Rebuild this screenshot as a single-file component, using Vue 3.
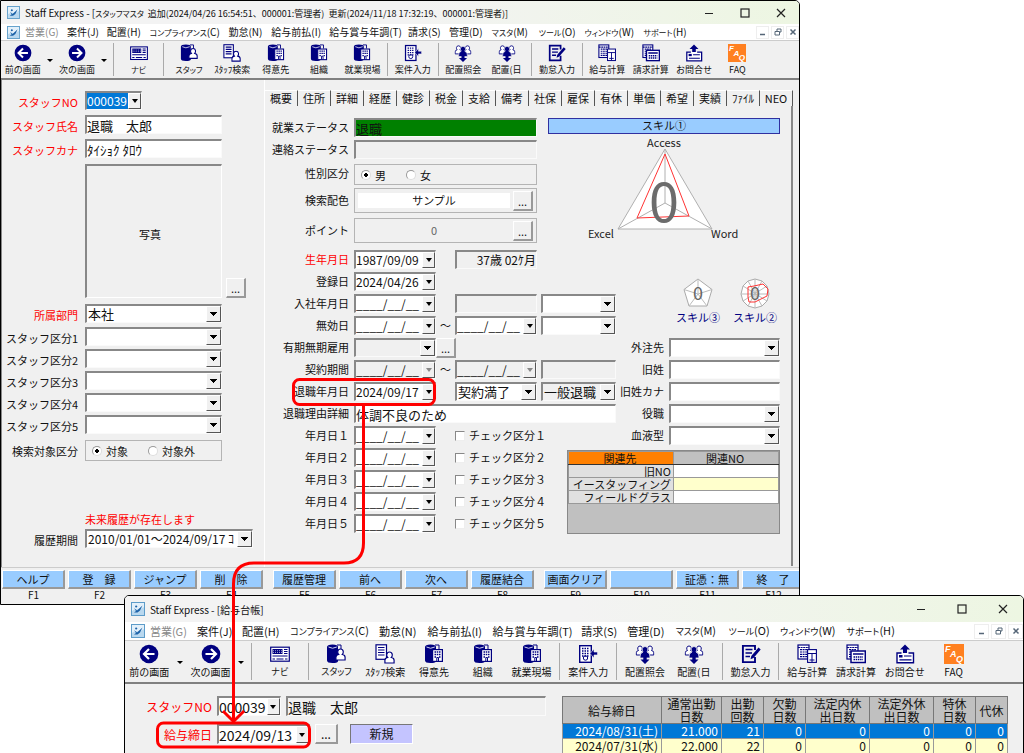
<script setup>
import { ref } from 'vue'

const menus = [
  { t: '営業', k: '(G)', off: true },
  { t: '案件', k: '(J)' },
  { t: '配置', k: '(H)' },
  { t: 'コンプライアンス', k: '(C)', kana: true },
  { t: '勤怠', k: '(N)' },
  { t: '給与前払', k: '(I)' },
  { t: '給与賞与年調', k: '(T)' },
  { t: '請求', k: '(S)' },
  { t: '管理', k: '(D)' },
  { t: 'マスタ', k: '(M)', kana: true },
  { t: 'ツール', k: '(O)', kana: true },
  { t: 'ウィンドウ', k: '(W)', kana: true },
  { t: 'サポート', k: '(H)', kana: true }
]

const tools = [
  { icon: 'prev', t: '前の画面' }, { drop: '前の画面の履歴' },
  { icon: 'next', t: '次の画面' }, { drop: '次の画面の履歴' },
  { sep: true }, { icon: 'navi', t: 'ナビ', kana: true },
  { sep: true }, { icon: 'staff', t: 'スタッフ', kana: true },
  { icon: 'search', t: 'ｽﾀｯﾌ検索' }, { icon: 'client', t: '得意先' },
  { icon: 'client', t: '組織' }, { icon: 'client', t: '就業現場' },
  { sep: true }, { icon: 'job', t: '案件入力' },
  { sep: true }, { icon: 'assign', t: '配置照会' }, { icon: 'assign', t: '配置(日' },
  { sep: true }, { icon: 'attend', t: '勤怠入力' },
  { sep: true }, { icon: 'pay', t: '給与計算' }, { icon: 'bill', t: '請求計算' },
  { icon: 'ask', t: 'お問合せ' }, { icon: 'faq', t: 'FAQ' }
]

const windows = [
  {
    id: 'master',
    title: [
      ['Staff Express - [', ''],
      ['スタッフマスタ', 'kana'],
      ['  追加(2024/04/26 16:54:51、000001:管理者)  更新(2024/11/18 17:32:19、000001:管理者)]', 'detail']
    ]
  },
  { id: 'ledger', title: [['Staff Express - [給与台帳]', '']] }
]

const tabs = ['概要', '住所', '詳細', '経歴', '健診', '税金', '支給', '備考', '社保', '雇保', '有休', '単価', '希望', '実績', 'ﾌｧｲﾙ', 'NEO']
const divisions = [1, 2, 3, 4, 5]
const wide = ['１', '２', '３', '４', '５']
const blank = '____/__/__'

const keys = [
  [['ヘルプ', 'F1'], ['登　録', 'F2'], ['ジャンプ', 'F3'], ['削　除', 'F4']],
  [['履歴管理', 'F5'], ['前へ', 'F6'], ['次へ', 'F7'], ['履歴結合', 'F8']],
  [['画面クリア', 'F9'], ['', 'F10'], ['証憑：無', 'F11'], ['終　了', 'F12']]
]

const heads = [['給与締日'], ['通常出勤', '日数'], ['出勤', '回数'], ['欠勤', '日数'], ['法定内休', '出日数'], ['法定外休', '出日数'], ['特休', '日数'], ['代休']]
const rows = [
  ['2024/08/31(土)', '21.000', '21', '0', '0', '0', '0', '0'],
  ['2024/07/31(水)', '22.000', '22', '0', '0', '0', '0', '0']
]

const target = ref('in')
const sex = ref('m')
</script>

<template>
  <main class="desktop">
    <svg class="defs" aria-hidden="true">
      <symbol id="i-logo" viewBox="0 0 14 14">
        <rect x=".5" y=".5" width="13" height="13" fill="#e3f0fa" stroke="#5d9cc9" />
        <path d="M1 9Q4 6 8 8L13 5V13H1Z" fill="#b9d8ef" />
        <path d="M3 6L6 8.500L11.500 3.500L9 8.500L6.500 10.500L3 10.500L5 9Z" fill="#1c62a8" />
        <circle cx="5.200" cy="4.500" r="1.100" fill="#1c62a8" />
      </symbol>
      <symbol id="i-prev" viewBox="0 0 20 20">
        <circle cx="10" cy="10" r="9.3" fill="#000080" />
        <path d="M15.500 10H5.500M10 5L5 10L10 15" fill="none" stroke="#fff" stroke-width="2.2" />
      </symbol>
      <symbol id="i-next" viewBox="0 0 20 20">
        <circle cx="10" cy="10" r="9.3" fill="#000080" />
        <path d="M4.500 10H14.500M10 5L15 10L10 15" fill="none" stroke="#fff" stroke-width="2.2" />
      </symbol>
      <symbol id="i-navi" viewBox="0 0 20 20">
        <rect x=".7" y="3.200" width="18.600" height="14" fill="#fff" stroke="#000080" stroke-width="1.200" />
        <rect x="2.500" y="5" width="10" height="5" fill="#000080" />
        <path d="M3 6.700H12M3 8.500H12" stroke="#fff" stroke-width=".6" stroke-dasharray="1 1" />
        <path d="M14 5.500H17.500M14 7.500H17.500M14 9.500H17.500M2.500 12H17.500M2.500 15H5M6.500 15H13.500M15 15H17.500" stroke="#000080" stroke-width="1.200" />
      </symbol>
      <symbol id="i-person" viewBox="0 0 12 14">
        <path d="M1 13V10Q1 7.500 4 7Q2.700 5.500 3 3.500Q3.500 1 6 1Q8.500 1 9 3.500Q9.300 5.500 8 7Q11 7.500 11 10V13Z" fill="#fff" stroke="#000080" stroke-width="1.300" />
      </symbol>
      <symbol id="i-book" viewBox="0 0 20 20">
        <path d="M1 3Q1 .5 6.500 .5Q12 .5 12 3V17.500Q11 19 6.500 19Q1 19 1 16.500Z" fill="#000080" />
        <path d="M2.500 3Q6.500 5.500 10.800 3" fill="none" stroke="#cfd2ee" stroke-width="1" />
        <path d="M11 1H15V5" fill="none" stroke="#000080" stroke-width="1" />
      </symbol>
      <symbol id="i-staff" viewBox="0 0 20 20">
        <use href="#i-book" width="20" height="20" />
        <use href="#i-person" x="9" y="4" width="11" height="13" />
      </symbol>
      <symbol id="i-search" viewBox="0 0 20 20">
        <rect x="1" y=".8" width="10.500" height="14.500" fill="#fff" stroke="#000080" stroke-width="1.200" />
        <path d="M3 3.500H9.500M3 6H9.500M3 8.500H9.500M3 11H9.500" stroke="#000080" stroke-width="1.200" />
        <use href="#i-person" x="9" y="7" width="11" height="13" />
      </symbol>
      <symbol id="i-client" viewBox="0 0 20 20">
        <use href="#i-book" width="20" height="20" />
        <rect x="8.600" y="5.600" width="9.800" height="11.800" fill="#fff" stroke="#000080" stroke-width="1.200" />
        <path d="M10.500 8H12M15 8H16.500M12.700 8H14.300M10.500 10.500H12M12.700 10.500H14.300M15 10.500H16.500M10.500 13H12M15 13H16.500" stroke="#000080" stroke-width="1.300" />
        <path d="M12.800 17V13.500H14.500V17" fill="none" stroke="#000080" />
      </symbol>
      <symbol id="i-job" viewBox="0 0 20 20">
        <rect x="1.700" y="1.700" width="11.600" height="16.600" fill="#fff" stroke="#000080" stroke-width="1.400" />
        <path d="M4 4.500H11M4 7H11M4 9.500H11M4 12H11" stroke="#000080" stroke-width="1.300" stroke-dasharray="1.500 1" />
        <circle cx="7.500" cy="14" r="2.200" fill="none" stroke="#000080" />
        <path d="M12 9.500L16 5V8H19.500V11H16V14Z" fill="#000080" stroke="#f0f0f0" stroke-width=".6" />
      </symbol>
      <symbol id="i-assign" viewBox="0 0 20 20">
        <use href="#i-person" x=".5" y="0" width="9" height="13" />
        <use href="#i-person" x="10.500" y="0" width="9" height="13" />
        <path d="M5 14Q4.500 9 8 8Q6.700 6 7.300 4.500Q8 2.500 10 2.500Q12 2.500 12.700 4.500Q13.300 6 12 8Q15.500 9 15 14Z" fill="#000080" stroke="#f0f0f0" stroke-width=".8" />
        <path d="M8.300 13H11.700V15.500H14.500L10 20L5.500 15.500H8.300Z" fill="#000080" />
      </symbol>
      <symbol id="i-attend" viewBox="0 0 20 20">
        <path d="M14 6V1.900H1.900V18.100H14V13" fill="none" stroke="#000080" stroke-width="1.900" />
        <path d="M4.500 5.500H11.500M4.500 9H11M4.500 12.500H9" stroke="#000080" stroke-width="1.600" />
        <path d="M17.500 3.500L19.700 5.500L12.500 14L9.500 15.300L10.300 12Z" fill="#000080" />
      </symbol>
      <symbol id="i-pay" viewBox="0 0 20 20">
        <rect x="1" y="1" width="11" height="14" fill="#fff" stroke="#000080" stroke-width="1.200" />
        <path d="M1 3.500H12M3 5.700H10M3 8H10M3 10.300H10M3 12.600H10" stroke="#000080" stroke-width="1.200" stroke-dasharray="2 .6" />
        <rect x="10.600" y="5.600" width="8.800" height="12.800" fill="#fff" stroke="#000080" stroke-width="1.100" />
        <path d="M11 9.500H19M15 9.500V18M12.500 16H17.500" stroke="#000080" stroke-width="1" />
      </symbol>
      <symbol id="i-bill" viewBox="0 0 20 20">
        <rect x="1" y="1" width="11" height="14" fill="#fff" stroke="#000080" stroke-width="1.200" />
        <path d="M1 3.500H12M3 5.700H10M3 8H10M3 10.300H10M3 12.600H10" stroke="#000080" stroke-width="1.200" stroke-dasharray="2 .6" />
        <rect x="5" y="7" width="14.300" height="11.500" fill="#fff" stroke="#000080" stroke-width="1.500" />
        <path d="M7 10H17.500" stroke="#000080" stroke-width="1.700" />
        <path d="M7.500 13H17M7.500 15.500H17" stroke="#000080" stroke-width="1.500" stroke-dasharray="1.500 .7" />
      </symbol>
      <symbol id="i-ask" viewBox="0 0 20 20">
        <path d="M6.500 9H2V18.800H18.500V9H13.500" fill="#fff" stroke="#000080" stroke-width="1.400" />
        <path d="M10 .5L15 5.500H12V9H8V5.500H5Z" fill="#000080" />
        <rect x="4" y="11" width="3.500" height="2.500" fill="#000080" />
        <path d="M9 12H16.500M4.500 15.800H16.500" stroke="#000080" stroke-width="1.200" />
      </symbol>
    </svg>

    <section v-for="w in windows" :key="w.id" class="window" :class="w.id">
      <header class="titlebar">
        <svg class="logo" aria-hidden="true"><use href="#i-logo" /></svg>
        <h1><span v-for="(p, i) in w.title" :key="i" :class="p[1]">{{ p[0] }}</span></h1>
        <div class="sysbtns">
          <button aria-label="最小化"><svg viewBox="0 0 10 10"><path d="M1 5.500H9" /></svg></button>
          <button aria-label="最大化"><svg viewBox="0 0 10 10"><rect x="1" y="1" width="8" height="8" /></svg></button>
          <button aria-label="閉じる"><svg viewBox="0 0 10 10"><path d="M1 1L9 9M9 1L1 9" /></svg></button>
        </div>
      </header>
      <div class="menubar">
        <svg class="logo" aria-hidden="true"><use href="#i-logo" /></svg>
        <nav>
          <button v-for="m in menus" :key="m.t" :class="{ off: m.off }"><span :class="{ kana: m.kana }">{{ m.t }}</span>{{ m.k }}</button>
        </nav>
        <div class="mdi">
          <button aria-label="子画面を最小化"><svg viewBox="0 0 8 8"><path d="M1 6.500H6" /></svg></button>
          <button aria-label="子画面を元に戻す"><svg viewBox="0 0 8 8"><path class="thin" d="M3 3V1H7V4H6M1 3.500H5.500V7H1Z" /></svg></button>
          <button aria-label="子画面を閉じる"><svg viewBox="0 0 8 8"><path d="M1.500 1.500L6.500 6.500M6.500 1.500L1.500 6.500" /></svg></button>
        </div>
      </div>
      <div class="toolbar">
        <div class="tools">
          <template v-for="(t, i) in tools" :key="i">
            <i v-if="t.sep" class="sep"></i>
            <button v-else-if="t.drop" class="drop" :aria-label="t.drop"></button>
            <button v-else class="tool">
              <svg v-if="t.icon === 'faq'" class="faq" viewBox="0 0 20 20" aria-hidden="true">
                <rect width="20" height="20" fill="#ff8020" />
                <text x="1" y="8">F</text>
                <text x="6" y="13">A</text>
                <text x="12" y="18">Q</text>
              </svg>
              <svg v-else aria-hidden="true"><use :href="'#i-' + t.icon" /></svg>
              <span :class="{ kana: t.kana }">{{ t.t }}</span>
            </button>
          </template>
        </div>
      </div>

      <template v-if="w.id === 'master'">
        <div class="body">
          <form class="left" @submit.prevent>
            <label class="req" for="no">スタッフNO</label>
            <span class="combo short"><input id="no" class="picked" value="000039"><button type="button" class="arrow" aria-label="スタッフNOを選択"></button></span>
            <label class="req" for="name">スタッフ氏名</label>
            <input id="name" class="field" value="退職　太郎">
            <label class="req" for="kana">スタッフカナ</label>
            <input id="kana" class="field" value="ﾀｲｼｮｸ ﾀﾛｳ">
            <div class="photo">写真</div>
            <button type="button" class="more photo-more" aria-label="写真を選択">...</button>
            <label class="req" for="dept">所属部門</label>
            <span class="combo sel"><select id="dept"><option>本社</option></select></span>
            <template v-for="n in divisions" :key="n">
              <label :for="'div' + n">スタッフ区分{{ n }}</label>
              <span class="combo sel"><select :id="'div' + n"><option></option></select></span>
            </template>
            <span id="tgt" class="label tgt">検索対象区分</span>
            <div class="group tgt" role="radiogroup" aria-labelledby="tgt">
              <label><input v-model="target" type="radio" value="in">対象</label>
              <label><input v-model="target" type="radio" value="out">対象外</label>
            </div>
            <p class="notice">未来履歴が存在します</p>
            <label for="hist">履歴期間</label>
            <span class="combo sel hist"><select id="hist"><option>2010/01/01～2024/09/17 ｺ</option></select></span>
          </form>

          <div class="right">
            <div class="tabs" role="tablist">
              <button v-for="(t, i) in tabs" :key="t" role="tab" :aria-selected="i === 0">{{ t }}</button>
            </div>
            <form class="panel" @submit.prevent>
              <label class="r1" for="st1">就業ステータス</label>
              <input id="st1" class="field r1 s3 green" value="退職">
              <label class="r2" for="st2">連絡ステータス</label>
              <input id="st2" class="field r2 s3 gray">
              <span id="sx" class="label r3">性別区分</span>
              <div class="group r3 s3" role="radiogroup" aria-labelledby="sx">
                <label><input v-model="sex" type="radio" value="m">男</label>
                <label><input v-model="sex" type="radio" value="f">女</label>
              </div>
              <span class="label tall r4">検索配色</span>
              <div class="group tall r4 s3"><output class="sample">サンプル</output><button type="button" class="more" aria-label="配色を選択">...</button></div>
              <span class="label tall r5">ポイント</span>
              <div class="group tall r5 s3"><output class="points">0</output><button type="button" class="more" aria-label="ポイント明細">...</button></div>

              <label class="req r6" for="birth">生年月日</label>
              <span class="combo r6 c2"><input id="birth" value="1987/09/09"><button type="button" class="arrow" aria-label="日付を選択"></button></span>
              <output class="field gray age r6 c4">37歳 02ｹ月</output>
              <label class="r7" for="reg">登録日</label>
              <span class="combo r7 c2"><input id="reg" value="2024/04/26"><button type="button" class="arrow" aria-label="日付を選択"></button></span>
              <label class="r8" for="join">入社年月日</label>
              <span class="combo r8 c2"><input id="join" :value="blank"><button type="button" class="arrow" aria-label="日付を選択"></button></span>
              <input class="field gray r8 c4" aria-label="勤続期間">
              <span class="combo sel r8 c6"><select aria-label="入社区分"><option></option></select></span>
              <label class="r9" for="inv">無効日</label>
              <span class="combo r9 c2"><input id="inv" :value="blank"><button type="button" class="arrow" aria-label="日付を選択"></button></span>
              <span class="tilde r9">～</span>
              <span class="combo r9 c4"><input aria-label="無効日終了" :value="blank"><button type="button" class="arrow" aria-label="日付を選択"></button></span>
              <span class="combo sel r9 c6"><select aria-label="無効区分"><option></option></select></span>
              <label class="r10" for="term">有期無期雇用</label>
              <span class="combo sel gray r10 c2"><select id="term"><option></option></select></span>
              <button type="button" class="more c3 r10" aria-label="雇用形態の明細">...</button>
              <label class="r11" for="con">契約期間</label>
              <span class="combo gray r11 c2"><input id="con" :value="blank"><button type="button" class="arrow" aria-label="日付を選択"></button></span>
              <span class="tilde r11">～</span>
              <span class="combo gray r11 c4"><input aria-label="契約期間終了" :value="blank"><button type="button" class="arrow" aria-label="日付を選択"></button></span>
              <input class="field gray r11 c6" aria-label="契約日数">
              <label class="r12" for="quit">退職年月日</label>
              <span class="combo r12 c2"><input id="quit" value="2024/09/17"><button type="button" class="arrow" aria-label="日付を選択"></button></span>
              <span class="combo sel r12 c4"><select aria-label="退職理由"><option>契約満了</option></select></span>
              <span class="combo sel gray r12 c6"><select aria-label="退職区分"><option>一般退職</option></select></span>
              <label class="r13" for="why">退職理由詳細</label>
              <input id="why" class="field r13 s5" value="体調不良のため">
              <template v-for="(n, i) in wide" :key="n">
                <label :class="'r' + (14 + i)" :for="'ymd' + i">年月日{{ n }}</label>
                <span class="combo c2" :class="'r' + (14 + i)"><input :id="'ymd' + i" :value="blank"><button type="button" class="arrow" aria-label="日付を選択"></button></span>
                <label class="check" :class="'r' + (14 + i)"><input type="checkbox">チェック区分{{ n }}</label>
              </template>

              <label class="c7 r10" for="out">外注先</label>
              <span class="combo sel r10 c8"><select id="out"><option></option></select></span>
              <label class="c7 r11" for="old">旧姓</label>
              <input id="old" class="field r11 c8">
              <label class="c7 r12" for="oldk">旧姓カナ</label>
              <input id="oldk" class="field r12 c8">
              <label class="c7 r13" for="pos">役職</label>
              <span class="combo sel r13 c8"><select id="pos"><option></option></select></span>
              <label class="c7 r14" for="blood">血液型</label>
              <span class="combo sel r14 c8"><select id="blood"><option></option></select></span>

              <div class="skill">
                <h2>スキル①</h2>
                <svg class="radar" viewBox="0 0 232 106">
                  <path d="M117 15L70 95H164Z" fill="#fff" stroke="#b0b0b0" />
                  <path d="M117 15V69L70 95M117 69L164 95" fill="none" stroke="#b0b0b0" />
                  <path d="M117 20L89 84L141 82Z" fill="none" stroke="#f33" />
                  <text x="116" y="88" class="big" text-anchor="middle">0</text>
                  <text x="116" y="13" text-anchor="middle">Access</text>
                  <text x="40" y="104">Excel</text>
                  <text x="163" y="104">Word</text>
                </svg>
                <div class="minis">
                  <button type="button">
                    <svg viewBox="0 0 30 32">
                      <path d="M15 1L29 11.500L24 28H6L1 11.500Z" fill="#fff" stroke="#aaa" />
                      <path d="M15 1V16L29 11.500M15 16L24 28M15 16L6 28M15 16L1 11.500" fill="none" stroke="#bbb" />
                      <text x="15" y="22" text-anchor="middle">0</text>
                    </svg>
                    スキル③
                  </button>
                  <button type="button">
                    <svg viewBox="0 0 30 32">
                      <path d="M15 1L22 3L27 8L29 16L27 23L22 28L15 30L8 28L3 23L1 16L3 8L8 3Z" fill="#fff" stroke="#aaa" />
                      <path d="M15 1V30M22 3L8 28M27 8L3 23M29 16H1M27 23L3 8M22 28L8 3" stroke="#bbb" />
                      <path d="M8 9L14 8L23 6L28 11L27 18L15 24L9 24L8 19Z" fill="none" stroke="#f33" />
                      <text x="15" y="22" text-anchor="middle">0</text>
                    </svg>
                    スキル②
                  </button>
                </div>
              </div>

              <div class="linkbox">
                <table>
                  <thead><tr><th class="hot">関連先</th><th>関連NO</th></tr></thead>
                  <tbody>
                    <tr><th>旧NO</th><td></td></tr>
                    <tr><th>イースタッフィング</th><td class="cream"></td></tr>
                    <tr><th>フィールドグラス</th><td></td></tr>
                  </tbody>
                </table>
              </div>
            </form>
          </div>
        </div>
        <footer class="keys">
          <div v-for="(g, i) in keys" :key="i" class="keygroup">
            <div v-for="k in g" :key="k[1]" class="key">
              <button :aria-label="k[0] || k[1]">{{ k[0] }}</button><span>{{ k[1] }}</span>
            </div>
          </div>
        </footer>
      </template>

      <div v-else class="ledger-body">
        <form @submit.prevent>
          <div class="line">
            <label class="req" for="no2">スタッフNO</label>
            <span class="combo n2"><input id="no2" value="000039"><button type="button" class="arrow" aria-label="スタッフNOを選択"></button></span>
            <input class="field gray grow" aria-label="氏名" value="退職　太郎">
          </div>
          <div class="line">
            <label class="req" for="close">給与締日</label>
            <span class="combo d2"><input id="close" value="2024/09/13"><button type="button" class="arrow" aria-label="日付を選択"></button></span>
            <button type="button" class="more" aria-label="給与締日の一覧">...</button>
            <output class="fresh">新規</output>
          </div>
        </form>
        <table class="pay">
          <colgroup><col class="w99"><col class="w60"><col class="w42"><col class="w42"><col class="w64"><col class="w64"><col class="w42"><col class="w32"></colgroup>
          <thead><tr><th v-for="h in heads" :key="h.join()"><div v-for="l in h" :key="l">{{ l }}</div></th></tr></thead>
          <tbody>
            <tr v-for="(r, i) in rows" :key="i" :class="{ on: i === 0 }"><td v-for="(c, j) in r" :key="j">{{ c }}</td></tr>
          </tbody>
        </table>
      </div>
    </section>

    <svg class="marks" viewBox="0 0 1024 753" aria-hidden="true">
      <rect x="293.500" y="379.500" width="141" height="25" rx="6" />
      <path d="M363.500 405V543Q363.500 563 344 563H254Q233.500 563 233.500 584V721M223 711L233.500 721.500L244 711" />
      <rect x="157.500" y="723" width="152" height="24" rx="6" />
    </svg>
  </main>
</template>

<style>
body { margin: 0; background: #fff; }
</style>

<style scoped>
* { box-sizing: border-box; }
.desktop {
  position: relative;
  min-height: 753px;
  overflow: hidden;
  font-family: "Noto Sans CJK JP", "Liberation Sans", sans-serif;
  font-size: 11px;
  color: #111;
}
button, input, select { font: inherit; color: inherit; margin: 0; padding: 0; border: 0; border-radius: 0; background: none; }
button { cursor: pointer; white-space: nowrap; }
.defs { position: absolute; width: 0; height: 0; }
.marks { position: absolute; left: 0; top: 0; width: 1024px; height: 753px; pointer-events: none; fill: none; stroke: #f00; stroke-width: 3; }

.window { position: absolute; background: #f0f0f0; border: 1px solid #000; overflow: hidden; }
.master { left: 0; top: 0; width: 78.125%; height: 605px; border-top-right-radius: 5px; }
.ledger { right: 0; top: 595px; width: 87.9%; height: 160px; border-radius: 5px 5px 0 0; }

.titlebar { display: flex; align-items: center; height: 23px; padding-left: 6px; background: linear-gradient(90deg, #f3f3f3 50%, #edf6e2); }
.ledger .titlebar { height: 26px; }
.logo { flex: none; width: 13px; height: 13px; }
.ledger .logo { width: 14px; height: 14px; }
h1 { margin: 0 0 0 5px; font-size: 10px; font-weight: 400; white-space: pre; }
.detail { font-size: 9px; }
.kana { font-size: 8px; font-feature-settings: "palt"; }
.ledger .kana { font-size: 9px; }
.sysbtns { margin-left: auto; display: flex; }
.sysbtns button { width: 36px; height: 20px; display: grid; place-items: center; }
.ledger .sysbtns button { width: 41px; }
.sysbtns svg { width: 10px; height: 10px; fill: none; stroke: #222; stroke-width: 1.2; }
.menubar { display: flex; align-items: center; height: 16px; padding-left: 6px; background: #fff; font-size: 10px; }
.ledger .menubar { height: 18px; font-size: 11px; }
nav { display: grid; grid-template-columns: 42fr 40fr 43fr 79fr 43fr 58fr 79fr 41fr 43fr 47fr 46fr 59fr 47fr; width: 84%; margin-left: 5px; }
nav button { min-width: 0; text-align: left; line-height: 16px; }
nav .off { color: #888; }
.mdi { margin-left: auto; display: flex; gap: 2px; }
.mdi button { width: 13px; height: 13px; border: 1px solid #eee; display: grid; place-items: center; }
.ledger .mdi button { width: 15px; height: 15px; }
.mdi svg { width: 8px; height: 8px; fill: none; stroke: #567; stroke-width: 1.5; }
.mdi .thin { stroke-width: 1; }
.toolbar { height: 40px; border-top: 1px solid #ccc; border-bottom: 2px solid #808080; }
.ledger .toolbar { height: 44px; }
.tools { display: flex; width: 95%; height: 100%; align-items: stretch; }
.tool { flex: 43 1 0; min-width: 0; display: flex; flex-direction: column; align-items: center; padding-top: 3px; font-size: 9px; line-height: 15px; }
.tool svg { flex: none; width: 18px; height: 18px; }
.tool span { display: block; height: 15px; }
.ledger .tool { font-size: 10px; }
.ledger .tool svg { width: 20px; height: 20px; }
.faq { font: italic 700 9px "Liberation Sans", sans-serif; fill: #fff; }
.drop { flex: 11 1 0; display: grid; place-items: center; padding-top: 2px; }
.drop::after { content: ""; border: 3px solid transparent; border-top-color: #000; border-bottom: 0; }
.sep { flex: 7 1 0; margin: 2px 0; background: linear-gradient(#aaa, #aaa) center / 1px 100% no-repeat; }

.body { display: flex; height: 487px; border-left: 1px solid #888; padding-left: 1px; }
.left { flex: none; width: 262px; border-right: 1px solid #fff; padding-top: 11px; display: grid; grid-template-columns: 82px 137px 24px; grid-template-rows: 24px 24px 25px 140px 23px repeat(5, 22px) 72px 20px 20px; align-items: start; }
.left > label, .left > .label { grid-column: 1; padding-right: 7px; text-align: right; line-height: 22px; white-space: nowrap; }
.left > .field, .left > .combo, .left > .group { grid-column: 2; }
.left > .tgt { margin-top: 3px; }
.req { color: #f00; }
.short { width: 57px; }
.picked { background: #0078d7; color: #fff; }
.photo { grid-column: 2; height: 134px; padding: 4px 8px 0 0; border: 2px solid #888; border-right: 1px solid #fff; border-bottom: 1px solid #fff; display: grid; place-items: center; }
.photo-more { align-self: end; justify-self: end; margin-bottom: 6px; }
.notice { grid-column: 2; margin: 0; color: #f00; line-height: 20px; white-space: nowrap; }
.left > .hist { width: 168px; }

.field, .combo { height: 19px; min-width: 0; border: 2px solid #888; border-right: 1px solid #fafafa; border-bottom: 1px solid #fafafa; background: #fff; font-size: 13px; line-height: 15px; }
.field { width: 100%; }
.combo { display: flex; position: relative; }
.combo input { flex: 1; width: 0; min-width: 0; font-size: 12px; line-height: 16px; }
.combo select { appearance: none; width: 100%; padding: 0 14px 0 1px; line-height: 16px; overflow: hidden; }
.hist select { font-size: 12px; }
.arrow, .sel::after { width: 13px; border: 1px solid #fff; border-right-color: #555; border-bottom-color: #555; background: #f0f0f0; }
.arrow { flex: none; display: grid; place-items: center; }
.arrow::after { content: ""; border: 3px solid transparent; border-top: 4px solid #000; border-bottom: 0; }
.sel::after {
  content: ""; position: absolute; top: 0; right: 0; bottom: 0; pointer-events: none;
  background:
    linear-gradient(#000, #000) center 5px / 7px 1px no-repeat,
    linear-gradient(#000, #000) center 6px / 5px 1px no-repeat,
    linear-gradient(#000, #000) center 7px / 3px 1px no-repeat,
    linear-gradient(#000, #000) center 8px / 1px 1px no-repeat,
    #f0f0f0;
}
.gray { background: #f0f0f0; }
.gray .arrow::after { border-top-color: #888; }
.green { background: #008000; }
.more { width: 20px; height: 20px; border: 1px solid #fff; border-right: 2px solid #999; border-bottom: 2px solid #999; background: #f0f0f0; line-height: 18px; }
.group { display: flex; align-items: center; gap: 20px; height: 21px; padding-left: 6px; border: 1px solid #b4b4b4; }
.group label { display: flex; align-items: center; gap: 4px; }
input[type="radio"] { appearance: none; width: 10px; height: 10px; border: 1px solid #999; border-right-color: #ddd; border-bottom-color: #ddd; border-radius: 50%; background: #fff; }
input[type="radio"]:checked { background: radial-gradient(#000 0 2px, #fff 2px); }

.right { flex: 1; min-width: 0; padding: 10px 6px 0 0; }
.tabs { display: flex; }
.tabs button { flex: 1 1 0; min-width: 0; height: 16px; line-height: 15px; border-right: 1px solid #555; border-top: 1px solid #fff; }
.panel {
  height: 460px; padding: 12px 11px 0 0; border-right: 2px solid #888; display: grid; align-items: start;
  grid-template-columns: [lab] 84px [f1] 87px [g1] 19px [f2] 82px [g2] 4px [f3] 75px [lab2] 53px [f4] 1fr [end];
  grid-template-rows: 22px 24px 24px 30px 32px repeat(13, 22px);
}
.panel > label, .panel > .label { grid-column: 1; text-align: right; line-height: 19px; white-space: nowrap; }
.panel > .tall.label { line-height: 25px; }
.panel > .tall.group { height: 25px; padding: 0 3px; gap: 3px; }
.panel > .s3, .panel > .s5, .panel > .c2 { width: auto; margin-left: 5px; }
.panel > .s3 { grid-column: f1 / g2; }
.panel > .s5 { grid-column: f1 / lab2; }
.panel > .c2 { grid-column: f1; }
.panel > .c3 { grid-column: g1; }
.panel > .c4 { grid-column: f2; }
.panel > .c6 { grid-column: f3; }
.panel > .c7 { grid-column: lab2; padding-right: 5px; }
.panel > .c8 { grid-column: f4; }
.tilde { grid-column: g1; line-height: 19px; text-align: center; }
.panel > .check { grid-column: f2 / lab2; display: flex; align-items: center; gap: 4px; }
input[type="checkbox"] { appearance: none; width: 10px; height: 10px; border: 1px solid #888; border-right-color: #eee; border-bottom-color: #eee; background: #fff; }
.sample, .points { flex: 1; text-align: center; line-height: 15px; }
.sample { background: #fff; }
.points { color: #666; }
.age { text-align: right; font-size: 12px; }
.r1 { grid-row: 1; } .r2 { grid-row: 2; } .r3 { grid-row: 3; } .r4 { grid-row: 4; } .r5 { grid-row: 5; } .r6 { grid-row: 6; }
.r7 { grid-row: 7; } .r8 { grid-row: 8; } .r9 { grid-row: 9; } .r10 { grid-row: 10; } .r11 { grid-row: 11; } .r12 { grid-row: 12; }
.r13 { grid-row: 13; } .r14 { grid-row: 14; } .r15 { grid-row: 15; } .r16 { grid-row: 16; } .r17 { grid-row: 17; } .r18 { grid-row: 18; }
.skill { grid-column: f3 / end; grid-row: 1 / 10; margin-left: 7px; }
h2 { margin: 0; height: 16px; line-height: 13px; border: 1px solid #3030a0; background: #9cf; font-size: 11px; font-weight: 400; text-align: center; }
.radar { display: block; width: 100%; height: 106px; }
.radar text { font-size: 11px; fill: #222; }
.radar .big { font-size: 54px; font-weight: 400; fill: #6c6c6c; }
.minis { display: flex; justify-content: flex-end; gap: 13px; padding: 38px 3px 0 0; }
.minis button { display: flex; flex-direction: column; align-items: center; color: #000080; line-height: 14px; }
.minis svg { width: 30px; height: 32px; }
.minis text { font-size: 18px; fill: #666; }
.linkbox { grid-column: f3 / end; grid-row: 15 / 19; margin: 2px 0 0 26px; height: 84px; background: #c0c0c0; border: 1px solid #888; }
table { border-collapse: collapse; table-layout: fixed; width: 100%; }
.linkbox th, .linkbox td { height: 13px; padding: 0 2px 0 0; border: 1px solid #999; background: #e0e0e0; font-weight: 400; line-height: 12px; text-align: right; white-space: nowrap; }
.linkbox thead th { background: #c0c0c0; text-align: center; border-bottom-color: #333; }
.linkbox thead .hot { background: #ff8000; }
.linkbox td { background: #fff; }
.linkbox .cream { background: #ffc; }

.keys { display: flex; gap: 10px; padding: 2px 0 0 1px; border-top: 1px solid #ccc; }
.keygroup { flex: none; display: flex; gap: 3px; }
.key { flex: none; width: 63px; display: flex; flex-direction: column; }
.key button { height: 19px; border: 1px solid #fff; border-right: 2px solid #999; border-bottom: 2px solid #999; background: #9cf; line-height: 15px; }
.key span { text-align: center; font-size: 10px; line-height: 12px; }

.ledger-body { display: flex; justify-content: space-between; padding: 12px 15px 0 0; font-size: 12px; }
.ledger-body form { width: 421px; display: grid; gap: 8px; align-content: start; }
.line { display: flex; align-items: center; gap: 5px; }
.line label { flex: none; width: 87px; text-align: right; }
.line .combo, .line .field { height: 20px; font-size: 14px; }
.line .combo input { font-size: 14px; }
.n2 { flex: none; width: 64px; }
.d2 { flex: none; width: 93px; }
.line .grow { flex: 1; width: 0; }
.line .more { width: 23px; }
.fresh { width: 63px; height: 20px; margin-left: 7px; border: 1px solid #777; border-right-color: #fff; border-bottom-color: #fff; background: #c4c4ff; text-align: center; line-height: 18px; }
.pay { flex: none; width: 446px; border: 1px solid #777; }
.pay th { height: 26px; padding: 0; border: 1px solid #777; background: #c0c0c0; font-weight: 400; line-height: 13px; white-space: nowrap; }
.pay td { height: 15px; padding: 0 3px 0 0; border: 1px solid #999; background: #ffc; line-height: 14px; text-align: right; white-space: nowrap; }
.pay .on td { background: #0078d7; color: #fff; }
.w99 { width: 99px; } .w60 { width: 60px; } .w42 { width: 42px; } .w64 { width: 64px; } .w32 { width: 32px; }
</style>
